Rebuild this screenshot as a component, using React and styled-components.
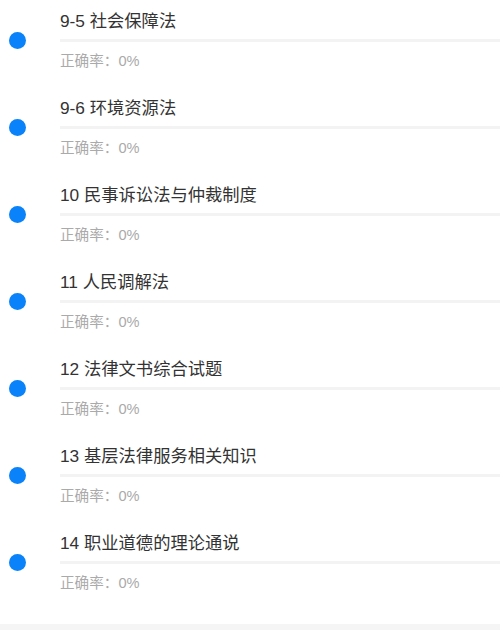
import styled, { createGlobalStyle } from 'styled-components'

const GlobalStyle = createGlobalStyle`
    html, body {
        margin: 0;
        padding: 0;
        background: #f5f5f5;
        font-family: "Liberation Sans", "Noto Sans CJK SC", sans-serif;
    }
`;

const List = styled.ul`
    list-style: none;
    margin: 0;
    padding: 0 0 15px 0;
    background: #fff;
`;

const Row = styled.li`
    display: flex;
    height: 87px;
`;

const DotCol = styled.div`
    width: 60px;
    flex-shrink: 0;
    display: flex;
    padding-top: 32px;
    padding-left: 9px;
    box-sizing: border-box;
`;

const Dot = styled.span`
    width: 17px;
    height: 17px;
    border-radius: 50%;
    background: #0a82fa;
`;

const Body = styled.div`
    flex: 1;
    display: flex;
    flex-direction: column;
    padding-top: 10px;
`;

const Title = styled.div`
    font-size: 17.3px;
    line-height: 22px;
    color: #333;
`;

const Bar = styled.div`
    height: 3px;
    margin-top: 7px;
    background: #f3f3f3;
`;

const Rate = styled.div`
    margin-top: 8px;
    font-size: 14.6px;
    line-height: 22px;
    color: #aaa;
`;

const chapters = [
    '9-5 社会保障法',
    '9-6 环境资源法',
    '10 民事诉讼法与仲裁制度',
    '11 人民调解法',
    '12 法律文书综合试题',
    '13 基层法律服务相关知识',
    '14 职业道德的理论通说',
];

function App() {
    return (
        <>
            <GlobalStyle />
            <List>
                {chapters.map((name) => (
                    <Row key={name}>
                        <DotCol>
                            <Dot />
                        </DotCol>
                        <Body>
                            <Title>{name}</Title>
                            <Bar />
                            <Rate>正确率：0%</Rate>
                        </Body>
                    </Row>
                ))}
            </List>
        </>
    )
}

export default App;
